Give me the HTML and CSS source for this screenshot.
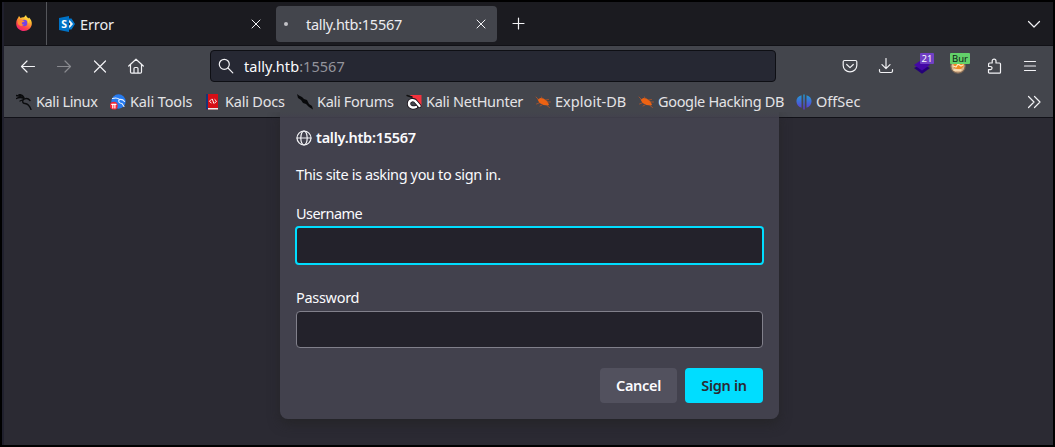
FILE: index.html
```html
<!DOCTYPE html>
<html lang="en">
<head>
<meta charset="utf-8">
<title>tally.htb:15567</title>
<link rel="stylesheet" href="styles.css">
</head>
<body>
<div class="window">
  <header class="tabs">
    <div class="pinned">
      <svg width="16" height="16" viewBox="0 0 16 16"><defs><linearGradient id="fox" x1=".8" y1="0" x2=".3" y2="1"><stop offset="0" stop-color="#fff44f"/><stop offset=".35" stop-color="#ffb52e"/><stop offset=".7" stop-color="#ff4a45"/><stop offset="1" stop-color="#f01c78"/></linearGradient></defs><path d="M2 3l1-2 1.500 2C5.500 2.300 7 2 8 2.300L10 0c.3 2 1.500 2.400 2.500 3.500L13 2.500c2 2 3 4 2.800 6.500C15.500 13 12 16 8 16S.2 13 .2 8.700C.2 6 1 4.300 2 3z" fill="url(#fox)"/><circle cx="8.200" cy="8" r="3.200" fill="#7542e5"/><path d="M3 4.500c1.500-.5 3 0 3.800 1L8.500 6c0 1-1.500 1.400-2.500 1.500C5.500 9 6.500 9.800 8 9.500c-1 1.500-3 2-5 .5S2 6 3 4.500z" fill="#ff8a35"/><path d="M8.500 3.500c3 0 4 2.500 3 5 1.200-.6 1.800-2 1.500-3L12 3z" fill="#ffcf3c"/></svg>
    </div>
    <div class="tab">
      <svg class="favicon" width="16" height="16" viewBox="0 0 16 16"><path d="M0 2l10-2v16L0 14z" fill="#0072c6"/><path d="M10 2.500h2.500L16 8l-3.500 5.500H10V11l2.500-3L10 5z" fill="#0078d0"/><path d="M10 4l1.500 1L14 8l-2.500 3-1.500 1V9.800L11.400 8 10 6.200z" fill="#e8f4fb"/><text class="logo-letter" x="2.200" y="12">S</text></svg>
      <span class="title error">Error</span>
      <svg class="close" width="10" height="10" viewBox="0 0 10 10"><path d="M1 1l8 8M9 1L1 9"/></svg>
    </div>
    <div class="tab active">
      <span class="dot"></span>
      <span class="title host">tally.htb:15567</span>
      <svg class="close" width="10" height="10" viewBox="0 0 10 10"><path d="M1 1l8 8M9 1L1 9"/></svg>
    </div>
    <svg class="plus" width="13" height="13" viewBox="0 0 13 13"><path d="M6.500 1v11M1 6.500h11"/></svg>
    <svg class="all-tabs" width="14" height="8" viewBox="0 0 14 8"><path d="M1.500 1.500L7 7l5.500-5.500"/></svg>
  </header>
  <nav class="toolbar">
    <div class="nav-buttons">
      <svg width="16" height="16" viewBox="0 0 16 16"><path d="M14.500 8.500H1.500M7 3L1.500 8.500 7 14"/></svg>
      <svg class="disabled" width="16" height="16" viewBox="0 0 16 16"><path d="M1.500 8.500h13M9 3l5.500 5.500L9 14"/></svg>
      <svg width="16" height="16" viewBox="0 0 16 16"><path d="M2.500 3l11 11M13.500 3l-11 11"/></svg>
      <svg width="16" height="16" viewBox="0 0 16 16"><path d="M.7 8L8 1.200 15.300 8M2.500 6.800v7.200q0 1.200 1.200 1.200h8.600q1.200 0 1.200-1.200V6.800M6 15v-4.500q0-1 1-1h2q1 0 1 1V15"/></svg>
    </div>
    <div class="url">
      <svg width="16" height="16" viewBox="0 0 16 16"><circle cx="6.300" cy="6.300" r="5"/><path d="M10 10l4.800 4.800"/></svg>
      <span class="address">tally.htb<span class="port">:15567</span></span>
    </div>
    <div class="tools">
      <svg width="16" height="16" viewBox="0 0 16 16"><path d="M2.500 2.500h11q1.300 0 1.300 1.300V7.500a6.800 6.300 0 0 1-13.600 0V3.800Q1.200 2.500 2.500 2.500zM4.700 6.500L8 9.600l3.300-3.100"/></svg>
      <svg width="16" height="16" viewBox="0 0 16 16"><path d="M8 .5v10M4 6.700l4 4 4-4M1.500 11.500V13q0 1.500 1.500 1.500h10q1.500 0 1.500-1.500v-1.500"/></svg>
      <div class="extension">
        <svg width="16" height="16" viewBox="0 0 16 16"><path class="layer-low" d="M0 10l8-4 8 4-8 5.800z"/><path class="layer-top" d="M0 7l8-5.500L16 7l-8 5.500z"/></svg>
        <span class="badge count">21</span>
      </div>
      <div class="extension">
        <svg width="16" height="16" viewBox="0 0 16 16"><circle class="face" cx="8" cy="8" r="7.200"/><path d="M3 3h10l1 5-4 4-6-2z" fill="#f08a24"/><path d="M3 8l3 1 2-3 3 2 2-1M4 12h7" fill="none" stroke="#ffe8bd" stroke-width="1.300"/></svg>
        <span class="badge burp">Bur</span>
      </div>
      <svg class="puzzle" width="16" height="16" viewBox="0 0 16 16"><path d="M1.600 8.500V6q0-1 1-1H5.200V3a1.900 1.900 0 0 1 3.800 0v2h3.500q1 0 1 1v8.200q0 1-1 1h-10q-1 0-1-1v-2.600h2a1.500 1.500 0 0 0 0-3.100z"/></svg>
      <svg width="16" height="16" viewBox="0 0 16 16"><path d="M2.500 3.500h11M2.500 8h11M2.500 12.500h11"/></svg>
    </div>
  </nav>
  <nav class="bookmarks">
    <a class="b1"><svg width="16" height="16" viewBox="0 0 16 16"><path class="ink" d="M0 1.500c3 .2 5 .5 7 2.500M.5 4.500C3 3 6 3.500 8 4.500M3 .5c2 0 4 1 5 3M8.500 5C6 6 6 9.500 9 9.500c3 .2 4.500 2 6 6M8.500 5c2-1 4-.5 5.500 1.500M4 7l3.500-1.500"/></svg><span>Kali Linux</span></a>
    <a class="b2"><svg width="16" height="16" viewBox="0 0 16 16"><circle cx="8.500" cy="7.500" r="7.200" fill="#267bf1"/><path d="M2.500 4.500c3-1 5-1 7 1 3-.5 4 .5 5 2M9.500 5.500c-2 2 0 4 2.500 4l2 3" fill="none" stroke="#e9f3ff" stroke-width="1.100"/><circle cx="3.800" cy="11.700" r="3.900" fill="#f32636"/><path d="M1.700 10.300H6M2.800 10.300v3.600M4.900 10.300v3.600" stroke="#fff"/></svg><span>Kali Tools</span></a>
    <a class="b3"><svg width="16" height="16" viewBox="0 0 16 16"><path d="M1 0h12v15.500H1z" fill="#d70e16"/><path d="M1 0h2v15.500H1z" fill="#173478"/><path d="M3 14h10v1.500H3z" fill="#eee"/><path d="M6.200 5.500L4.500 7.200 6.200 9M9.800 5.500l1.700 1.700L9.800 9M7.300 5.200l1.500 4" fill="none" stroke="#fff" stroke-width="1"/></svg><span>Kali Docs</span></a>
    <a class="b4"><svg width="16" height="16" viewBox="0 0 16 16"><path d="M0 0l2 1.500L5 3l2 2 3 1 2 4 3 2 1 3.500-4-2.500-3-3-3-1-2-3-3-2z" fill="#08090b"/></svg><span>Kali Forums</span></a>
    <a class="b5"><svg width="16" height="16" viewBox="0 0 16 16"><path d="M4 1h11.500v12z" fill="#f5323d"/><path d="M1 1.500l3 1 2 .5" fill="none" stroke="#111" stroke-width="1.400"/><path d="M13.500 12L10.500 8.500C8 4.500 3 6 3 9.700c0 3.300 4 4.500 7 3.300" fill="none" stroke="#171018" stroke-width="4"/><path d="M13.500 12L10.500 8.500C8 4.500 3 6 3 9.700c0 3.300 4 4.500 7 3.300" fill="none" stroke="#fff" stroke-width="2.400"/></svg><span>Kali NetHunter</span></a>
    <a class="b6"><svg width="16" height="16" viewBox="0 0 16 16"><path class="bug" d="M2.500 5.500l3-1.500 3 .5 3.500 2.500 2 3.500-1 1-4.500-.5-4-2z"/><path class="legs" d="M3.500 5.500L1 3M7 4.500l-.5-1.500M10.500 6l3-.5M4 9l-2.500 1M7 11l-2 1M12 11.500l2.500 2M12 8h3.500"/></svg><span>Exploit-DB</span></a>
    <a class="b7"><svg width="16" height="16" viewBox="0 0 16 16"><path class="bug" d="M2.500 5.500l3-1.500 3 .5 3.500 2.500 2 3.500-1 1-4.500-.5-4-2z"/><path class="legs" d="M3.500 5.500L1 3M7 4.500l-.5-1.500M10.500 6l3-.5M4 9l-2.500 1M7 11l-2 1M12 11.500l2.500 2M12 8h3.500"/></svg><span>Google Hacking DB</span></a>
    <a class="b8"><svg width="16" height="16" viewBox="0 0 16 16"><defs><linearGradient id="off" x2="0" y2="1"><stop stop-color="#20a0d7"/><stop offset="1" stop-color="#6033d5"/></linearGradient></defs><path fill="url(#off)" d="M5.500 1.300v12.500C-1 12-1.500 3 5.500 1.300zM7.300 .5h1.400v15H7.300zM10.500 1.300c7 1.700 6.500 10.700 0 12.500z"/></svg><span>OffSec</span></a>
    <svg class="more" width="14" height="14" viewBox="0 0 14 14"><path d="M1.500 1.500L7 7l-5.500 5.500M7.500 1.500L13 7l-5.500 5.500"/></svg>
  </nav>
  <main class="page">
    <form class="dialog">
      <div class="site"><svg width="16" height="16" viewBox="0 0 16 16"><circle cx="8" cy="8" r="7"/><ellipse cx="8" cy="8" rx="3.200" ry="7"/><path d="M1 8h14"/></svg><span>tally.htb:15567</span></div>
      <p class="message">This site is asking you to sign in.</p>
      <label class="user-label" for="user">Username</label>
      <input id="user" class="focused" type="text">
      <label class="pass-label" for="pass">Password</label>
      <input id="pass" type="password">
      <div class="actions"><button type="button" class="cancel">Cancel</button><button type="button" class="primary">Sign in</button></div>
    </form>
  </main>
</div>
</body>
</html>
```
FILE: styles.css
```css
* { box-sizing: border-box; }
body { margin: 0; overflow: hidden; background: #000; color: #fbfbfe; font: 14.5px/18px "Noto Sans", sans-serif; }
svg { display: block; flex: none; fill: none; stroke: #f2f2f5; stroke-width: 1.2; stroke-linecap: round; stroke-linejoin: round; }
svg [fill]:not([stroke]) { stroke: none; }
.window { height: 447px; border: 2px solid #000; padding-left: 2px; background: #20202d; white-space: nowrap; }
.tabs { height: 44px; background: #1b1b20; border-bottom: 1px solid #111116; display: flex; align-items: center; color: #ececef; }
.pinned { width: 43px; height: 43px; padding: 13px 0 0 12px; border-right: 1px solid #55565b; }
.tab { display: flex; align-items: center; width: 229px; height: 36px; padding: 0 15px 0 12px; }
.title { margin-left: 5px; }
.error { letter-spacing: -.1px; }
.logo-letter { font: 700 10.5px "Noto Sans", sans-serif; fill: #fff; stroke: none; }
.close { margin-left: auto; stroke-width: 1; }
.active { width: 221px; padding: 0 11px 0 8px; background: #43454c; border-radius: 4px; }
.dot { width: 4px; height: 4px; border-radius: 50%; background: #c2c2c7; }
.host { margin-left: 18px; letter-spacing: -.27px; }
.plus { margin-left: 15px; }
.all-tabs { margin: 0 12px 0 auto; }
.toolbar { height: 40px; background: #43454c; display: flex; align-items: center; }
.nav-buttons { width: 206px; display: flex; gap: 20px; padding-left: 16px; }
.disabled { opacity: .4; }
.url { width: 566px; height: 32px; border: 1px solid #0e0f14; border-radius: 4px; background: #262833; display: flex; align-items: center; padding-left: 7px; }
.address { margin-left: 10px; padding-bottom: 1px; letter-spacing: .05px; }
.port { color: #94949c; }
.tools { display: flex; gap: 20px; margin: 0 15px 0 auto; }
.extension { position: relative; }
.layer-low { fill: #250078; stroke: none; }
.layer-top { fill: #4408a6; stroke: none; }
.face { fill: #d8b18a; stroke: #7c6653; }
.badge { position: absolute; top: -5px; height: 11px; font-size: 9.5px; line-height: 11px; border-radius: 1px; }
.count { left: 6px; width: 14px; background: #7040c4; text-align: center; }
.burp { left: 0; width: 20px; background: #63d16a; color: #102016; text-align: center; }
.puzzle { margin: 0 -1px 0 1px; }
.bookmarks { height: 32px; background: #43454c; border-bottom: 1px solid #111118; display: flex; align-items: center; padding-left: 12px; color: #e3e3e6; }
.bookmarks a { display: flex; align-items: center; gap: 4px; }
.bookmarks span { padding-bottom: 2px; }
.b1 { width: 94px; letter-spacing: -.38px; }
.b2 { width: 95px; letter-spacing: -.13px; }
.b3 { width: 92px; letter-spacing: -.2px; }
.b4 { width: 109px; letter-spacing: -.32px; }
.b5 { width: 129px; letter-spacing: -.27px; }
.b6 { width: 103px; letter-spacing: .05px; }
.b7 { width: 158px; letter-spacing: -.33px; }
.ink { stroke: #0a0b0d; stroke-width: 1.3; }
.bug { fill: #ed6212; stroke: none; }
.legs { stroke: #c45622; stroke-width: .7; }
.more { margin: 0 12px 0 auto; }
.page { height: 327px; background: #2b2a33; display: flex; justify-content: center; }
.dialog { width: 499px; height: 307px; margin: -6px 0 0 2px; padding: 16px 16px 16px; background: linear-gradient(#42414d00, #42414d 6px); border-radius: 0 0 8px 8px; box-shadow: 0 5px 12px #2229; z-index: 1; clip-path: inset(0 -16px -20px); }
.site { display: flex; align-items: center; gap: 4px; height: 20px; font-weight: 600; letter-spacing: -.25px; }
.site span { padding-bottom: 2px; }
.message { height: 20px; margin: 17px 0 0; letter-spacing: -.37px; }
.dialog label { display: block; height: 20px; }
.dialog .user-label { margin-top: 19px; letter-spacing: -.55px; }
.dialog input { display: block; width: 467px; height: 37px; margin: 3px 0 0; border: 1px solid #81808b; border-radius: 4px; background: #23222b; outline: none; }
.dialog .focused { width: 469px; height: 39px; margin: 2px 0 0 -1px; border: 2px solid #00ddff; }
.dialog .pass-label { margin-top: 23px; letter-spacing: -.3px; }
.actions { display: flex; justify-content: flex-end; gap: 8px; margin-top: 20px; }
.actions button { width: 77px; height: 35px; border: 0; border-radius: 4px; padding: 0 0 2px; background: #52515e; color: #fbfbfe; font: 600 14.5px/18px "Noto Sans", sans-serif; letter-spacing: -.3px; }
.actions .primary { width: 78px; background: #00ddff; color: #2b2a33; }
```
